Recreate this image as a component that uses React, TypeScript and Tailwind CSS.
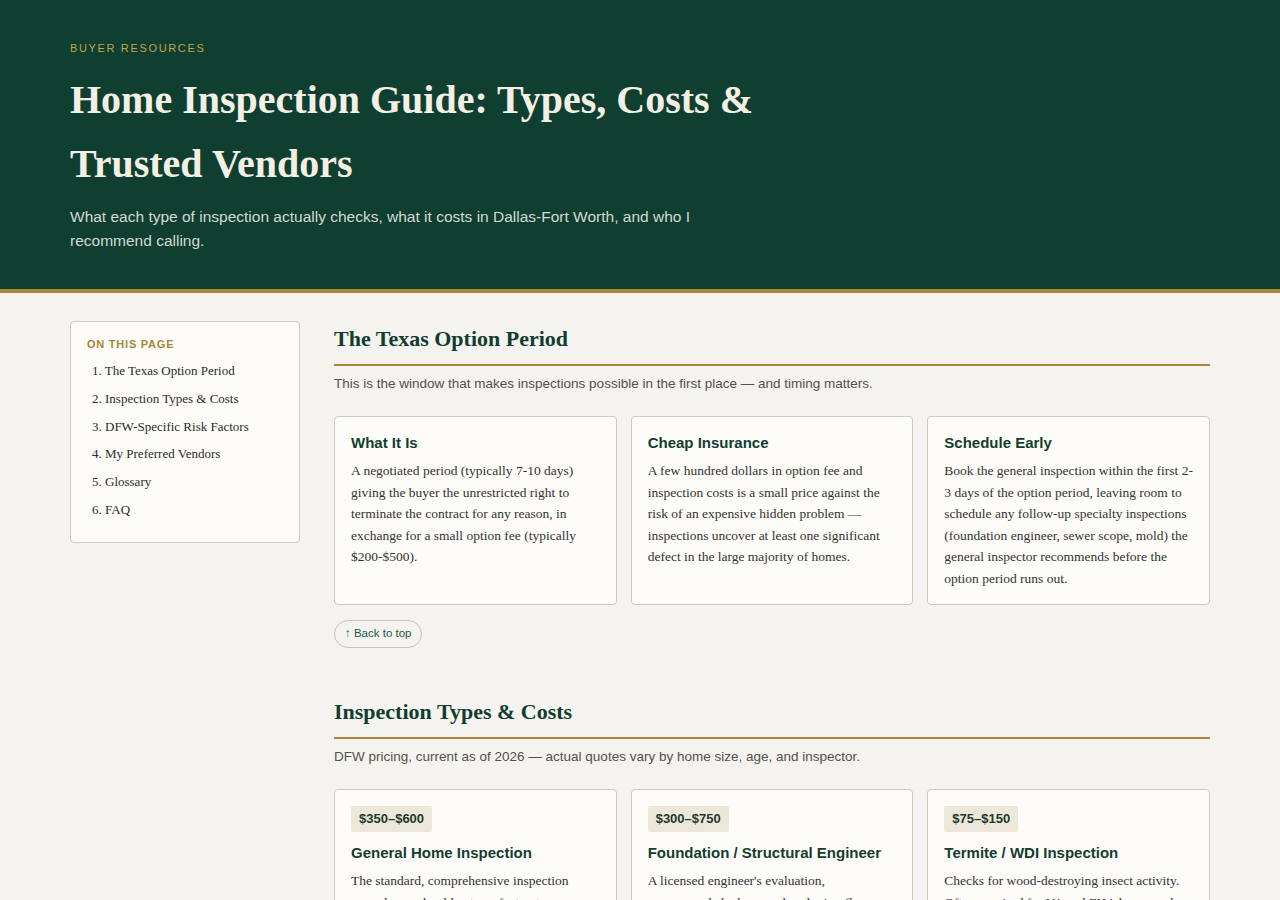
import React from 'react';

const serif = "font-['Liberation_Serif','Times_New_Roman',serif]";
const sans = "font-['Liberation_Sans',Arial,sans-serif]";

const tocItems = [
  'The Texas Option Period',
  'Inspection Types & Costs',
  'DFW-Specific Risk Factors',
  'My Preferred Vendors',
  'Glossary',
  'FAQ',
];

const optionCards = [
  {
    title: 'What It Is',
    body: 'A negotiated period (typically 7-10 days) giving the buyer the unrestricted right to terminate the contract for any reason, in exchange for a small option fee (typically $200-$500).',
  },
  {
    title: 'Cheap Insurance',
    body: 'A few hundred dollars in option fee and inspection costs is a small price against the risk of an expensive hidden problem — inspections uncover at least one significant defect in the large majority of homes.',
  },
  {
    title: 'Schedule Early',
    body: 'Book the general inspection within the first 2-3 days of the option period, leaving room to schedule any follow-up specialty inspections (foundation engineer, sewer scope, mold) the general inspector recommends before the option period runs out.',
  },
];

const inspectionCards = [
  {
    price: '$350–$600',
    title: 'General Home Inspection',
    body: 'The standard, comprehensive inspection every home should get: roof, structure, electrical, plumbing, HVAC, appliances, and visible signs of water damage, performed by a TREC-licensed inspector.',
  },
  {
    price: '$300–$750',
    title: 'Foundation / Structural Engineer',
    body: "A licensed engineer's evaluation, recommended when cracks, sloping floors or sticking doors suggest movement — especially common on North Texas expansive clay soils.",
  },
  {
    price: '$75–$150',
    title: 'Termite / WDI Inspection',
    body: 'Checks for wood-destroying insect activity. Often required for VA and FHA loans, and strongly recommended for any home in the DFW area.',
  },
];

function SectionHeading({ title, subtitle }: { title: string; subtitle: string }) {
  return (
    <>
      <h2 className={`${serif} mt-1 border-b-2 border-[#a8873a] pb-[11px] text-[22px] font-bold leading-[28px] text-[#123d2e]`}>
        {title}
      </h2>
      <p className={`${sans} mt-[8px] text-[13.5px] leading-[20px] text-[#555049]`}>{subtitle}</p>
    </>
  );
}

function Card({ price, title, body }: { price?: string; title: string; body: string }) {
  return (
    <div className="rounded-[4px] border border-[#cdc9bd] bg-[#fdfcf8] px-[16px] pt-[16px] pb-[15px]">
      {price && (
        <div className={`${sans} mb-[11px] w-fit rounded-[2px] bg-[#ede7d9] px-[8px] py-[4px] text-[13px] font-bold leading-[18px] text-[#1d3b2f]`}>
          {price}
        </div>
      )}
      <h3 className={`${sans} text-[15px] font-bold leading-[20px] text-[#133d2f]`}>{title}</h3>
      <p className={`${serif} mt-[7px] text-[13.5px] leading-[21.5px] text-[#333333]`}>{body}</p>
    </div>
  );
}

function BackToTop() {
  return (
    <button className={`${sans} mt-[15px] h-[28px] rounded-full border border-[#c8c4b8] px-[10px] text-[11.5px] text-[#1f5a40]`}>
      ↑ Back to top
    </button>
  );
}

export default function App() {
  return (
    <div className="min-h-screen bg-[#f4f3ef]">
      {/* Header */}
      <header className="border-b-4 border-[#a8873a] bg-[#0f3f30]">
        <div className="mx-auto max-w-[1140px] pt-[41px] pb-[36px]">
          <div className={`${sans} text-[11px] leading-[14px] tracking-[0.15em] text-[#c2a24e]`}>BUYER RESOURCES</div>
          <h1 className={`${serif} mt-[13px] max-w-[720px] text-[40px] font-bold leading-[64px] text-[#f3efe2]`}>
            Home Inspection Guide: Types, Costs &amp; Trusted Vendors
          </h1>
          <p className={`${sans} mt-[9px] max-w-[680px] text-[15.5px] leading-[24px] text-[#d3d9d2]`}>
            What each type of inspection actually checks, what it costs in Dallas-Fort Worth, and who I recommend calling.
          </p>
        </div>
      </header>

      {/* Body */}
      <div className="mx-auto flex max-w-[1140px] items-start gap-[34px] pt-[28px]">
        <aside className="w-[230px] shrink-0 rounded-[4px] border border-[#cdc9bd] bg-[#fdfcf8] px-[16px] pt-[15px] pb-[18px]">
          <div className={`${sans} text-[11px] font-bold leading-[14px] tracking-[0.07em] text-[#a8873a]`}>ON THIS PAGE</div>
          <ol className={`${serif} mt-[6px] pl-[5px] text-[13px] text-[#2b2b2b]`}>
            {tocItems.map((item, i) => (
              <li key={item} className="leading-[27.8px]">
                {i + 1}. {item}
              </li>
            ))}
          </ol>
        </aside>

        <main className="min-w-0 flex-1">
          <section>
            <SectionHeading
              title="The Texas Option Period"
              subtitle="This is the window that makes inspections possible in the first place — and timing matters."
            />
            <div className="mt-[22px] grid grid-cols-3 gap-[14px]">
              {optionCards.map((c) => (
                <Card key={c.title} {...c} />
              ))}
            </div>
            <BackToTop />
          </section>

          <section className="mt-[50px]">
            <SectionHeading
              title="Inspection Types & Costs"
              subtitle="DFW pricing, current as of 2026 — actual quotes vary by home size, age, and inspector."
            />
            <div className="mt-[22px] grid grid-cols-3 gap-[14px]">
              {inspectionCards.map((c) => (
                <Card key={c.title} {...c} />
              ))}
            </div>
            <BackToTop />
          </section>
        </main>
      </div>
    </div>
  );
}
